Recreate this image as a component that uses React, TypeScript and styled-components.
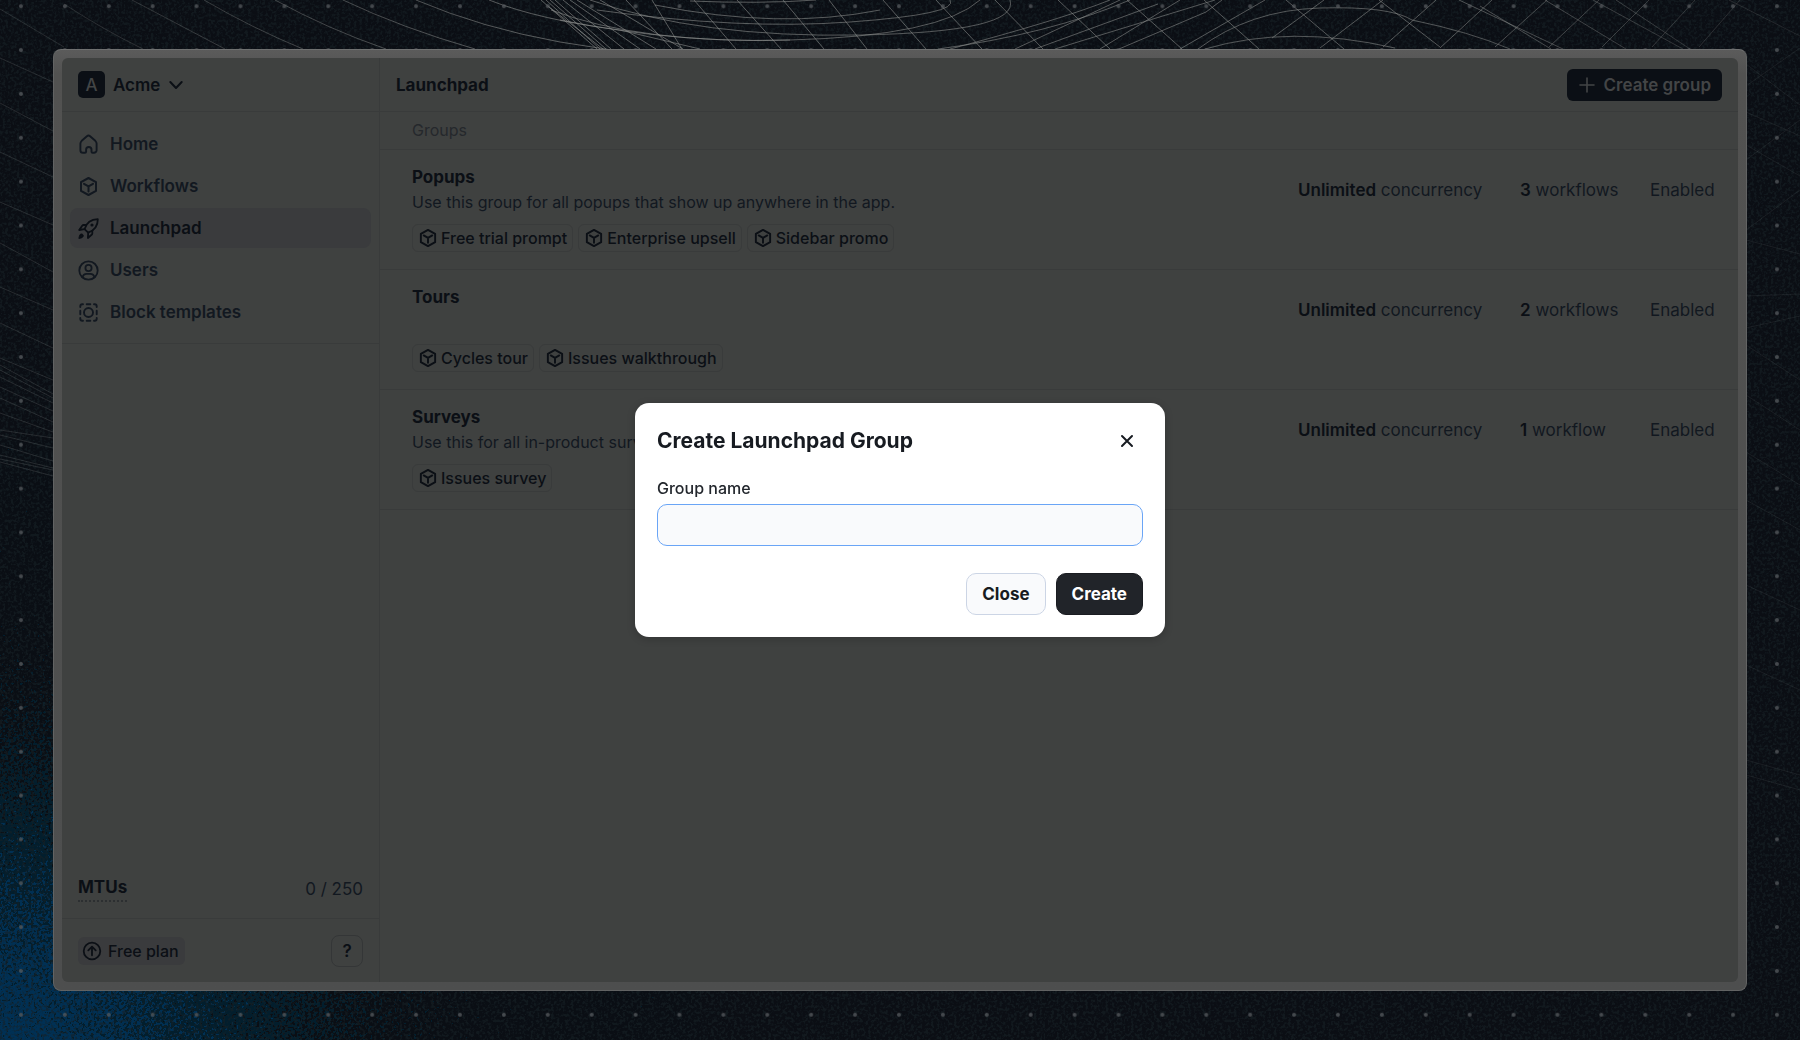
import React, { useEffect, useRef, useState } from "react";
import styled, { createGlobalStyle } from "styled-components";

const color = {
  surface: "#3f4140",
  line: "#393b3b",
  active: "#3a3b3d",
  ink: "#0b0f15",
  text: "#121820",
  muted: "#25282c",
  dimmed: "#434546",
};

const GlobalStyle = createGlobalStyle`
  *, *::before, *::after { box-sizing: border-box; }
  html, body { margin: 0; }
  body {
    background: #0b0e14;
    color: ${color.text};
    font-family: Inter, "Liberation Sans", sans-serif;
    font-size: 16px;
    line-height: 24px;
    -webkit-font-smoothing: antialiased;
  }
  button, input { font: inherit; color: inherit; }
  h1, h2, h3, p, ul { margin: 0; padding: 0; }
`;

/* ---------- page and backdrop ---------- */

const Page = styled.div`
  position: relative;
  display: flex;
  min-height: 100vh;
  padding: 49px 53px;
  overflow: hidden;
`;

const Sky = styled.svg`
  position: absolute;
  inset: 0;
  width: 100%;
  height: 100%;
`;

const Frame = styled.div`
  position: relative;
  flex: 1;
  display: flex;
  padding: 8px;
  border: 1px solid #626363;
  border-top-color: #6f7070;
  border-radius: 8px;
  background: linear-gradient(#5b5b5b 0, #525251 24px, #4d4e4e 100%);
`;

const Shell = styled.div`
  flex: 1;
  display: flex;
  min-width: 0;
  overflow: hidden;
  border-radius: 6px;
  background: ${color.surface};
`;

/* ---------- sidebar ---------- */

const Sidebar = styled.aside`
  display: flex;
  flex-direction: column;
  flex: 0 0 318px;
  border-right: 1px solid ${color.line};
`;

const SidebarTop = styled.div`
  display: flex;
  align-items: center;
  height: 54px;
  padding: 0 16px;
  border-bottom: 1px solid ${color.line};
`;

const WorkspaceButton = styled.button`
  display: flex;
  align-items: center;
  gap: 8px;
  padding: 0;
  border: 0;
  background: none;
  color: ${color.ink};
  font-size: 17px;
  font-weight: 600;
`;

const WorkspaceBadge = styled.span`
  display: grid;
  place-items: center;
  width: 27px;
  height: 27px;
  border-radius: 5px;
  background: ${color.ink};
  color: ${color.dimmed};
  font-weight: 500;
`;

const Nav = styled.nav`
  display: flex;
  flex-direction: column;
  gap: 2px;
  padding: 12px 8px 11px;
  border-bottom: 1px solid ${color.line};
`;

const NavLink = styled.a<{ $active?: boolean }>`
  display: flex;
  align-items: center;
  gap: 11px;
  height: 40px;
  padding: 0 8px;
  border-radius: 8px;
  background: ${(p) => (p.$active ? color.active : "transparent")};
  color: ${(p) => (p.$active ? color.ink : color.text)};
  font-size: 17px;
  font-weight: 600;
  text-decoration: none;
`;

const Usage = styled.div`
  display: flex;
  align-items: center;
  justify-content: space-between;
  margin-top: auto;
  padding: 0 16px 16px;
  font-size: 17px;
`;

const UsageLabel = styled.span`
  padding-bottom: 2px;
  border-bottom: 2px dotted #2c2f31;
  color: ${color.ink};
  font-weight: 700;
  line-height: 22px;
`;

const SidebarFoot = styled.div`
  display: flex;
  align-items: center;
  justify-content: space-between;
  height: 64px;
  padding: 0 16px;
  border-top: 1px solid ${color.line};
`;

const PlanButton = styled.button`
  display: flex;
  align-items: center;
  gap: 6px;
  height: 28px;
  padding: 0 6px 0 4px;
  border: 0;
  border-radius: 6px;
  background: ${color.active};
  color: ${color.ink};
  font-size: 16px;
  font-weight: 500;
`;

const HelpButton = styled.button`
  display: grid;
  place-items: center;
  width: 32px;
  height: 32px;
  padding: 0;
  border: 1px solid #343637;
  border-radius: 8px;
  background: none;
  color: ${color.ink};
  font-size: 17px;
  font-weight: 600;
`;

/* ---------- main ---------- */

const Main = styled.main`
  flex: 1;
  min-width: 0;
`;

const MainTop = styled.header`
  display: flex;
  align-items: center;
  justify-content: space-between;
  height: 54px;
  padding: 0 16px;
  border-bottom: 1px solid ${color.line};
`;

const PageTitle = styled.h1`
  color: ${color.ink};
  font-size: 17px;
  font-weight: 700;
`;

const CreateGroupButton = styled.button`
  display: flex;
  align-items: center;
  gap: 7px;
  height: 32px;
  padding: 0 11px 0 10px;
  border: 0;
  border-radius: 6px;
  background: ${color.ink};
  color: ${color.dimmed};
  font-size: 17px;
  font-weight: 600;
`;

const SectionLabel = styled.h2`
  height: 38px;
  padding: 0 32px;
  border-bottom: 1px solid ${color.line};
  color: ${color.muted};
  font-size: 16px;
  font-weight: 400;
  line-height: 37px;
`;

const GroupList = styled.ul`
  list-style: none;
`;

const GroupRow = styled.li`
  display: grid;
  grid-template-columns: minmax(0, 1fr) 222px 130px 66px;
  height: 120px;
  padding: 14px 22px 17px 32px;
  border-bottom: 1px solid ${color.line};
  font-size: 17px;
`;

const GroupInfo = styled.div`
  display: flex;
  flex-direction: column;
`;

const GroupName = styled.h3`
  color: ${color.ink};
  font-size: 17px;
  font-weight: 700;
  line-height: 26px;
`;

const GroupText = styled.p`
  font-size: 16px;
`;

const Chips = styled.div`
  display: flex;
  gap: 5px;
  margin-top: auto;
`;

const Chip = styled.a`
  display: flex;
  align-items: center;
  gap: 3px;
  height: 28px;
  padding: 0 5px;
  border: 1px solid ${color.line};
  border-radius: 6px;
  color: ${color.ink};
  font-size: 16px;
  font-weight: 500;
  text-decoration: none;
`;

const Cell = styled.span`
  padding-top: 14px;
  white-space: nowrap;

  b {
    color: ${color.ink};
    font-weight: 600;
  }
`;

/* ---------- dialog ---------- */

const Overlay = styled.div`
  position: fixed;
  inset: 0;
  display: grid;
  place-items: center;
`;

const Dialog = styled.form`
  width: 530px;
  max-width: calc(100vw - 32px);
  padding: 22px;
  border-radius: 14px;
  background: #ffffff;
  box-shadow: 0 2px 8px rgba(0, 0, 0, 0.2);
  color: #171b21;
`;

const DialogTop = styled.div`
  display: flex;
  align-items: center;
  justify-content: space-between;
  height: 32px;
`;

const DialogTitle = styled.h2`
  font-size: 21px;
  font-weight: 700;
`;

const IconButton = styled.button`
  display: grid;
  place-items: center;
  width: 32px;
  height: 32px;
  padding: 0;
  border: 0;
  background: none;
`;

const Field = styled.label`
  display: flex;
  flex-direction: column;
  gap: 4px;
  margin-top: 19px;
  color: #23272d;
  font-size: 16px;
  font-weight: 500;
`;

const TextInput = styled.input`
  width: 100%;
  height: 42px;
  padding: 0 12px;
  border: 1px solid #cbd3e3;
  border-radius: 10px;
  outline: none;
  background: #f9fafc;
  caret-color: transparent;

  &:focus {
    border-color: #6aa5f6;
  }
`;

const DialogActions = styled.div`
  display: flex;
  justify-content: flex-end;
  gap: 10px;
  margin-top: 27px;
`;

const DialogButton = styled.button<{ $primary?: boolean }>`
  height: 42px;
  padding: 0 15px;
  border: 1px solid ${(p) => (p.$primary ? "#1a1c21" : "#ccd5e5")};
  border-radius: 10px;
  background: ${(p) => (p.$primary ? "#212429" : "#f9fafc")};
  color: ${(p) => (p.$primary ? "#ffffff" : "#171b21")};
  font-size: 17px;
  font-weight: 700;
`;

/* ---------- icons ---------- */

const Glyph = styled.svg`
  flex: none;
  fill: none;
  stroke: currentColor;
  stroke-linecap: round;
  stroke-linejoin: round;
`;

type IconProps = { size?: number };

const HomeIcon = () => (
  <Glyph width="21" height="21" viewBox="0 0 21 21" strokeWidth="1.9">
    <path d="M2.400 9.600c0-1.200.5-2 1.300-2.800l5.200-4.600a2.400 2.400 0 0 1 3.200 0l5.200 4.600c.8.8 1.300 1.600 1.300 2.800v6.600a2.600 2.600 0 0 1-2.600 2.600h-1.400c-.7 0-1.100-.4-1.100-1.100v-2a2.700 2.700 0 0 0-5.400 0v2c0 .7-.4 1.100-1.100 1.100H5a2.600 2.600 0 0 1-2.600-2.600z" />
  </Glyph>
);

const CubeIcon = ({ size = 21 }: IconProps) => (
  <Glyph width={size} height={size} viewBox="0 0 21 21" strokeWidth="2">
    <path d="M10.500 2 18 6.100v8.800L10.500 19 3 14.900V6.100z" />
    <path d="m6 7.800 4.500 2.600L15 7.800M10.500 10.400V15.600" />
  </Glyph>
);

const RocketIcon = () => (
  <Glyph width="21" height="21" viewBox="0 0 21 21" strokeWidth="1.800">
    <path d="M6.500 11.200C8 6.300 12 1.300 19.800 1.200c.1 7.500-4.600 11.600-9.600 13.500z" />
    <path d="M8.200 7H5.600c-.6 0-1 .2-1.400.7L1.200 12l5.300-.8M14.300 12.600v2.800c0 .6-.3 1-.7 1.400L9.900 20l.3-5.300" />
    <circle cx="14" cy="7" r=".7" fill="currentColor" />
    <path d="M1.200 20.200c0-2 .3-4 2-4.200 1.500-.1 2.500 1.200 1.900 2.400-.6 1.400-2.200 1.700-3.900 1.800z" fill="currentColor" strokeWidth="1" />
  </Glyph>
);

const UserIcon = () => (
  <Glyph width="21" height="21" viewBox="0 0 21 21" strokeWidth="1.800">
    <circle cx="10.500" cy="10.500" r="9.200" />
    <circle cx="10.500" cy="8" r="3.100" />
    <path d="M4.600 17.300c.5-2.400 2.200-3.500 4-3.500h3.800c1.800 0 3.500 1.100 4 3.500" />
  </Glyph>
);

const BlockIcon = () => (
  <Glyph width="21" height="21" viewBox="0 0 21 21" strokeWidth="1.900">
    <circle cx="10.500" cy="10.500" r="4.500" />
    <path d="M2.300 5V4.300a2 2 0 0 1 2-2H5M16 2.300h.7a2 2 0 0 1 2 2V5M18.700 16v.7a2 2 0 0 1-2 2H16M5 18.700h-.7a2 2 0 0 1-2-2V16M8.700 2.300h3.600M8.700 18.700h3.600M2.300 8.700v3.600M18.700 8.700v3.600" />
  </Glyph>
);

const ChevronIcon = () => (
  <Glyph width="16" height="16" viewBox="0 0 16 16" strokeWidth="2">
    <path d="m2.300 5 5.700 6 5.700-6" />
  </Glyph>
);

const PlusIcon = () => (
  <Glyph width="20" height="20" viewBox="0 0 20 20" strokeWidth="1.600">
    <path d="M10 3v14M3 10h14" />
  </Glyph>
);

const UpgradeIcon = () => (
  <Glyph width="20" height="20" viewBox="0 0 20 20" strokeWidth="1.800">
    <circle cx="10" cy="10" r="8.300" />
    <path d="M10 14.300V6M6.300 9.400 10 5.700l3.700 3.700" />
  </Glyph>
);

const CloseIcon = () => (
  <Glyph width="16" height="16" viewBox="0 0 16 16" strokeWidth="2">
    <path d="m3 3 10 10M13 3 3 13" />
  </Glyph>
);

/* ---------- backdrop drawing ---------- */

const leftStrands = [
  "M0 9 64 47", "M0 58 53 82", "M0 103 53 131", "M0 152 53 177",
  "M0 202 53 225", "M0 243 53 272", "M0 287 53 310", "M0 323 53 348",
  "M0 358 53 380", "M0 365 53 394", "M0 370 53 398", "M0 377 53 403",
  "M0 387 53 411", "M0 398 53 422", "M0 413 53 432", "M0 430 53 438",
  "M0 435 53 448", "M0 445 53 461", "M0 455 53 468", "M0 459 53 470",
  "M0 462 53 476",
];

const rightStrands = [
  "M1746 64 1800 105", "M1746 112 1800 136", "M1746 145 1800 176",
  "M1746 160 1800 120", "M1746 230 1800 190", "M1746 86 1800 48",
  "M1746 240 1800 254", "M1746 328 1800 316", "M1746 345 1800 380",
  "M1746 395 1800 430", "M1746 452 1800 485", "M1746 500 1800 530",
  "M1746 585 1800 610", "M1746 665 1800 690", "M1746 296 1800 294",
  "M1746 760 1800 775", "M1746 775 1800 790",
];

const mesh = [
  "M64 4Q104 30 143 49", "M132 0 225 49", "M204 0Q252 28 303 49",
  "M275 0Q328 29 386 49", "M343 0Q402 28 475 49", "M416 0Q482 28 560 42L612 50",
  "M489 0Q540 20 620 30L700 49", "M541 0 597 49", "M546 0 600 49",
  "M550 0 606 49", "M555 0 611 49", "M563 0 624 49", "M570 0 640 49",
  "M577 0 656 49", "M600 0 683 49", "M548 6 603 49", "M626 0 672 49",
  "M551 10Q640 44 790 40T980 0", "M560 20Q680 44 790 40",
  "M590 0Q700 38 860 35T1010 0", "M597 10Q740 30 850 22T950 0",
  "M655 5Q780 30 880 10", "M690 1Q760 4 816 0",
  "M652 0 682 49", "M694 0 736 49", "M737 0 781 49", "M783 0 824 49",
  "M829 0 867 49", "M883 0 926 49", "M936 0 982 49", "M995 0 1043 49",
  "M1058 0 1110 49", "M1127 0 1182 49", "M1204 0 1259 49",
  "M938 49Q1050 34 1130 0", "M950 49Q1060 20 1110 0", "M1015 49 1120 0",
  "M1035 49 1158 4", "M1055 49 1215 0", "M1100 49 1180 0", "M1119 49 1206 12 1222 0",
  "M1180 49 1265 0", "M1198 49Q1250 10 1320 8T1412 20Q1470 32 1510 49",
  "M1205 49Q1290 24 1395 48", "M1272 38 1324 0", "M1320 48 1383 0",
  "M1383 47 1436 0", "M1440 48 1492 0", "M1495 47 1547 0", "M1549 47 1599 0",
  "M1602 47 1649 0", "M1652 47 1695 0", "M1699 47 1740 0", "M1286 0 1344 49",
  "M1379 0 1440 47", "M1459 0 1563 49", "M1480 6 1551 49", "M1545 0 1626 49",
  "M1593 0 1683 49", "M1616 0 1690 49", "M1729 0 1800 36",
];

const Backdrop = () => (
  <Sky viewBox="0 0 1800 1040" preserveAspectRatio="xMidYMid slice" aria-hidden="true">
    <defs>
      <radialGradient id="glow" gradientUnits="userSpaceOnUse" cx="0" cy="0" r="1" gradientTransform="translate(0 1040) scale(500 440)">
        <stop offset="0" stopColor="#e6e6e6" />
        <stop offset="0.300" stopColor="#a8a8a8" />
        <stop offset="0.600" stopColor="#595959" />
        <stop offset="1" stopColor="#000000" />
      </radialGradient>
      <linearGradient id="meshFade" gradientUnits="userSpaceOnUse" x1="0" y1="0" x2="1800" y2="0">
        <stop offset="0" stopColor="#8d8f8d" stopOpacity="0.150" />
        <stop offset="0.300" stopColor="#8d8f8d" stopOpacity="0.600" />
        <stop offset="0.800" stopColor="#8d8f8d" stopOpacity="0.550" />
        <stop offset="1" stopColor="#8d8f8d" stopOpacity="0.150" />
      </linearGradient>
      <pattern id="dots" width="43.900" height="43.850" x="-0.900" y="-15.700" patternUnits="userSpaceOnUse">
        <circle cx="21.900" cy="22" r="2" fill="#565b5e" fillOpacity="0.750" />
      </pattern>
      <filter id="grain" x="0" y="0" width="100%" height="100%" colorInterpolationFilters="sRGB">
        <feTurbulence type="fractalNoise" baseFrequency="0.350" numOctaves="2" seed="4" />
        <feColorMatrix values="0 0 0 0 0.090  0 0 0 0 0.130  0 0 0 0 0.150  5 0 0 0 -2.300" />
      </filter>
      <filter id="dither" x="0" y="0" width="100%" height="100%" colorInterpolationFilters="sRGB">
        <feTurbulence type="fractalNoise" baseFrequency="0.350" numOctaves="2" seed="9" />
        <feColorMatrix values="1 0 0 0 0  1 0 0 0 0  1 0 0 0 0  0 0 0 0 1" result="noise" />
        <feComposite in="SourceGraphic" in2="noise" operator="arithmetic" k1="0" k2="1" k3="1" k4="-0.500" />
        <feComponentTransfer>
          <feFuncR type="discrete" tableValues="0.043 0.008 0" />
          <feFuncG type="discrete" tableValues="0.055 0.120 0.190" />
          <feFuncB type="discrete" tableValues="0.080 0.180 0.330" />
          <feFuncA type="linear" slope="0" intercept="1" />
        </feComponentTransfer>
      </filter>
    </defs>
    <rect width="1800" height="1040" fill="#0b0e14" />
    <rect y="440" width="700" height="600" fill="url(#glow)" filter="url(#dither)" />
    <rect width="1800" height="1040" filter="url(#grain)" opacity="0.600" />
    <path d={leftStrands.join("")} fill="none" stroke="#7b8081" strokeOpacity="0.250" />
    <path d={rightStrands.join("")} fill="none" stroke="#7b8081" strokeOpacity="0.140" />
    <path d={mesh.join("")} fill="none" stroke="url(#meshFade)" />
    <rect width="1800" height="1040" fill="url(#dots)" />
  </Sky>
);

/* ---------- data ---------- */

const navItems = [
  { label: "Home", icon: <HomeIcon /> },
  { label: "Workflows", icon: <CubeIcon /> },
  { label: "Launchpad", icon: <RocketIcon />, active: true },
  { label: "Users", icon: <UserIcon /> },
  { label: "Block templates", icon: <BlockIcon /> },
];

const groups = [
  {
    name: "Popups",
    text: "Use this group for all popups that show up anywhere in the app.",
    workflows: ["Free trial prompt", "Enterprise upsell", "Sidebar promo"],
  },
  { name: "Tours", text: "", workflows: ["Cycles tour", "Issues walkthrough"] },
  { name: "Surveys", text: "Use this for all in-product surveys.", workflows: ["Issues survey"] },
];

export default function App() {
  const [name, setName] = useState("");
  const [open, setOpen] = useState(true);
  const input = useRef<HTMLInputElement>(null);

  useEffect(() => {
    if (open) input.current?.focus();
  }, [open]);

  return (
    <>
      <GlobalStyle />
      <Page>
        <Backdrop />
        <Frame>
          <Shell>
            <Sidebar>
              <SidebarTop>
                <WorkspaceButton type="button">
                  <WorkspaceBadge>A</WorkspaceBadge>
                  Acme
                  <ChevronIcon />
                </WorkspaceButton>
              </SidebarTop>
              <Nav>
                {navItems.map((item) => (
                  <NavLink key={item.label} href="#" $active={item.active}>
                    {item.icon}
                    {item.label}
                  </NavLink>
                ))}
              </Nav>
              <Usage>
                <UsageLabel>MTUs</UsageLabel>
                <span>0 / 250</span>
              </Usage>
              <SidebarFoot>
                <PlanButton type="button">
                  <UpgradeIcon />
                  Free plan
                </PlanButton>
                <HelpButton type="button">?</HelpButton>
              </SidebarFoot>
            </Sidebar>
            <Main>
              <MainTop>
                <PageTitle>Launchpad</PageTitle>
                <CreateGroupButton type="button" onClick={() => setOpen(true)}>
                  <PlusIcon />
                  Create group
                </CreateGroupButton>
              </MainTop>
              <SectionLabel>Groups</SectionLabel>
              <GroupList>
                {groups.map((group) => (
                  <GroupRow key={group.name}>
                    <GroupInfo>
                      <GroupName>{group.name}</GroupName>
                      {group.text && <GroupText>{group.text}</GroupText>}
                      <Chips>
                        {group.workflows.map((workflow) => (
                          <Chip key={workflow} href="#">
                            <CubeIcon size={20} />
                            {workflow}
                          </Chip>
                        ))}
                      </Chips>
                    </GroupInfo>
                    <Cell>
                      <b>Unlimited</b> concurrency
                    </Cell>
                    <Cell>
                      <b>{group.workflows.length}</b>{" "}
                      {group.workflows.length === 1 ? "workflow" : "workflows"}
                    </Cell>
                    <Cell>Enabled</Cell>
                  </GroupRow>
                ))}
              </GroupList>
            </Main>
          </Shell>
        </Frame>
      </Page>
      {open && (
        <Overlay>
          <Dialog
            role="dialog"
            aria-modal="true"
            aria-labelledby="dialog-title"
            onSubmit={(event) => event.preventDefault()}
          >
            <DialogTop>
              <DialogTitle id="dialog-title">Create Launchpad Group</DialogTitle>
              <IconButton type="button" aria-label="Close dialog" onClick={() => setOpen(false)}>
                <CloseIcon />
              </IconButton>
            </DialogTop>
            <Field>
              Group name
              <TextInput
                ref={input}
                type="text"
                value={name}
                onChange={(event) => setName(event.target.value)}
              />
            </Field>
            <DialogActions>
              <DialogButton type="button" onClick={() => setOpen(false)}>
                Close
              </DialogButton>
              <DialogButton type="submit" $primary>
                Create
              </DialogButton>
            </DialogActions>
          </Dialog>
        </Overlay>
      )}
    </>
  );
}
